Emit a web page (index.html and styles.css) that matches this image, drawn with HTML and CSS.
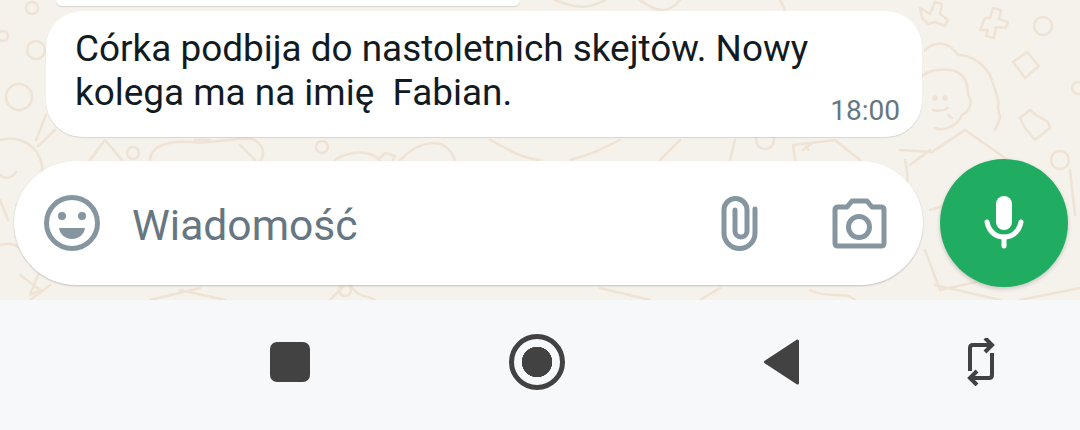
FILE: index.html
```html
<!DOCTYPE html>
<html lang="pl">
<head>
  <meta charset="UTF-8" />
  <title>Czat</title>
  <link rel="stylesheet" href="styles.css">
</head>
<body>
  <div class="chat">
    <!-- tapeta z rysunkami -->
    <svg class="wallpaper" width="1080" height="300" viewBox="0 0 1080 300">
      <circle cx="32" cy="8" r="6"/>
      <circle cx="3" cy="36" r="5"/>
      <circle cx="36" cy="50" r="9"/>
      <circle cx="19" cy="97" r="13"/>
      <path d="M46 115 L36 140 M55 130 L38 146"/>
      <path d="M0 140 C20 135 38 145 42 165 C44 178 34 195 16 205 M0 175 C5 180 12 178 16 172"/>
      <path d="M0 245 C15 240 25 250 30 262 M20 275 L40 290 L30 295 L38 275 M0 200 L8 220"/>
      <path d="M90 160 L105 140 L122 160"/>
      <circle cx="133" cy="153" r="6"/>
      <path d="M150 160 C150 148 165 140 190 142 C215 145 240 135 255 140 C268 150 262 158 260 162"/>
      <path d="M195 140 L210 140 M240 145 L255 160"/>
      <circle cx="322" cy="147" r="6"/>
      <path d="M335 160 C350 150 370 150 380 160 M378 160 L385 153 L395 156 L392 162"/>
      <path d="M400 160 C420 140 445 135 455 160 M490 140 C510 150 520 158 540 160"/>
      <path d="M620 140 C600 150 590 155 570 160 M680 140 L660 160 M735 140 L730 160"/>
      <circle cx="765" cy="140" r="9"/>
      <path d="M795 160 L793 145 L835 140 L860 160 M806 146 L808 150 M803 150 L811 144"/>
      <path d="M555 0 C580 10 590 8 605 0 M780 0 L785 10 M640 0 C660 15 670 12 680 0"/>
      <path d="M920 8 L930 14 L935 2 L942 4 L940 14 L948 20 L945 26 L935 22 L928 24 L922 18 Z"/>
      <path d="M980 30 L985 18 L990 18 L993 8 L1001 10 L999 19 L1008 22 L1006 28 L996 27 L994 38 L986 36 L988 30 Z"/>
      <circle cx="1043" cy="26" r="9"/>
      <path d="M1013 62 L1027 52 L1039 66 L1025 78 Z"/>
      <circle cx="1078" cy="88" r="6"/>
      <path d="M925 50 C935 40 950 42 958 55 C970 55 982 62 990 75 C995 90 1000 100 998 108 L1000 118 L995 130"/>
      <path d="M913 90 C918 72 935 68 950 70 C965 72 968 85 968 95 C972 100 972 110 962 115 C958 125 945 132 935 128"/>
      <circle cx="935" cy="98" r="1.5"/>
      <circle cx="945" cy="98" r="1.5"/>
      <path d="M933 110 C940 112 945 110 948 108 M948 115 L952 118"/>
      <path d="M900 150 L932 152 L965 130 L1008 160 M930 150 L910 165"/>
      <path d="M1020 118 L1030 110 L1036 115 L1048 122 L1050 128 L1035 140 L1025 128 Z"/>
      <circle cx="1060" cy="160" r="9"/>
      <path d="M875 175 C880 190 890 210 905 215 M905 160 C910 175 905 190 908 200"/>
      <path d="M930 210 L1000 190 M925 250 L940 290 L985 280 M935 285 L1000 300 M1020 300 L1080 288"/>
      <path d="M30 300 L50 285 M150 300 L200 288 M180 290 L225 300 M345 285 L330 300 M350 285 C360 300 370 295 375 300"/>
      <circle cx="345" cy="290" r="6"/>
      <path d="M600 288 L650 300 M700 300 L720 288 M810 290 C830 300 845 290 855 300 M1070 170 L1075 215"/>
    </svg>

    <div class="bubble-top"></div>

    <div class="bubble">
      <p class="bubble-text">Córka podbija do nastoletnich skejtów. Nowy<br>kolega ma na imię&nbsp; Fabian.</p>
      <span class="bubble-time">18:00</span>
    </div>

    <div class="composer">
      <div class="input-bar">
        <svg class="icon-emoji" width="56" height="56" viewBox="0 0 56 56">
          <circle cx="28" cy="28" r="25.5" fill="none" stroke="#8696a0" stroke-width="5"/>
          <circle cx="18" cy="21" r="4" fill="#8696a0"/>
          <circle cx="38" cy="21" r="4" fill="#8696a0"/>
          <path d="M15 33 H41 C40 40 34 44 28 44 C22 44 16 40 15 33 Z" fill="#8696a0"/>
        </svg>
        <span class="placeholder">Wiadomość</span>
        <svg class="icon-clip" width="40" height="56" viewBox="0 0 40 56">
          <path d="M36 14 V38 A15.5 15.5 0 0 1 5 38 V15 A11.5 11.5 0 0 1 28 15 V36 A6 6 0 0 1 16 36 V15" fill="none" stroke="#8696a0" stroke-width="5" stroke-linecap="round"/>
        </svg>
        <svg class="icon-camera" width="56" height="52" viewBox="0 0 56 52">
          <path d="M4 13 Q4 10 7 10 H16 L21 4 H36 L41 10 H50 Q53 10 53 13 V46 Q53 49 50 49 H7 Q4 49 4 46 Z" fill="none" stroke="#8696a0" stroke-width="5" stroke-linejoin="round"/>
          <circle cx="28" cy="30" r="10.5" fill="none" stroke="#8696a0" stroke-width="5"/>
        </svg>
      </div>
      <div class="mic-btn">
        <svg width="42" height="54" viewBox="0 0 42 54">
          <rect x="13" y="0" width="16" height="34" rx="8" fill="#fff"/>
          <path d="M4 26 C6 36 13 41 21 41 C29 41 36 36 38 26" fill="none" stroke="#fff" stroke-width="5" stroke-linecap="round"/>
          <path d="M21 41 V50" stroke="#fff" stroke-width="5" stroke-linecap="round"/>
        </svg>
      </div>
    </div>
  </div>

  <div class="navbar">
    <span class="nav-square"></span>
    <span class="nav-circle"></span>
    <svg class="nav-back" width="38" height="48" viewBox="0 0 38 48">
      <path d="M1.5 24 L33.5 3 V45 Z" fill="#424242" stroke="#424242" stroke-width="3" stroke-linejoin="round"/>
    </svg>
    <svg class="nav-rotate" width="30" height="48" viewBox="0 0 30 48">
      <path d="M4 33 V10 Q4 7 7 7 H26 M19 0 L26 7 L19 14" fill="none" stroke="#424242" stroke-width="4"/>
      <path d="M26 15 V37 Q26 40 23 40 H4 M11 33 L4 40 L11 47" fill="none" stroke="#424242" stroke-width="4"/>
    </svg>
  </div>
</body>
</html>
```

FILE: styles.css
```css
* { margin: 0; padding: 0; box-sizing: border-box; }

html, body {
  width: 1080px;
  height: 430px;
  overflow: hidden;
  font-family: 'Roboto', sans-serif;
  background: #f7f8fa;
}

.chat {
  position: relative;
  height: 300px;
  overflow: hidden;
  background: #f5f1eb;
}

.wallpaper {
  position: absolute;
  top: 0;
  left: 0;
  fill: none;
  stroke: #efe3d5;
  stroke-width: 2.5;
  stroke-linecap: round;
  stroke-linejoin: round;
}

.bubble-top {
  position: relative;
  height: 6px;
  width: 464px;
  margin-left: 56px;
  background: #fff;
  border-radius: 0 0 16px 16px;
  box-shadow: 0 1px 1px rgba(0, 0, 0, 0.13);
}

.bubble {
  position: relative;
  width: 876px;
  height: 126px;
  margin: 5px 0 0 46px;
  padding: 16px 22px 0 29px;
  background: #fff;
  border-radius: 36px;
  box-shadow: 0 1px 1px rgba(0, 0, 0, 0.12);
}

.bubble-text {
  font-size: 36.9px;
  line-height: 44px;
  color: #111b21;
}

.bubble-time {
  position: absolute;
  right: 22px;
  bottom: 11px;
  font-size: 28px;
  line-height: 30px;
  color: #667781;
}

.composer {
  position: relative;
  display: flex;
  align-items: center;
  margin-top: 22px;
  padding-left: 14px;
}

.input-bar {
  display: flex;
  align-items: center;
  width: 909px;
  height: 124px;
  padding-left: 30px;
  background: #fff;
  border-radius: 62px;
  box-shadow: 0 1px 2px rgba(0, 0, 0, 0.2);
}

.placeholder {
  margin-left: 32px;
  padding-top: 3px;
  flex: 1;
  font-size: 42.6px;
  color: #667781;
}

.icon-clip { margin-right: 72px; }
.icon-camera { margin-right: 36px; }

.mic-btn {
  display: flex;
  align-items: center;
  justify-content: center;
  width: 128px;
  height: 128px;
  margin-left: 17px;
  background: #21ad61;
  border-radius: 50%;
  box-shadow: 0 2px 4px rgba(0, 0, 0, 0.18);
}

.navbar {
  display: flex;
  align-items: center;
  gap: 199px;
  height: 130px;
  padding: 0 0 6px 270px;
  background: #f7f8fa;
}

.nav-square {
  width: 40px;
  height: 40px;
  background: #424242;
  border-radius: 7px;
}

.nav-circle {
  display: flex;
  width: 56px;
  height: 56px;
  border: 5px solid #424242;
  border-radius: 50%;
  background: radial-gradient(circle, #424242 0 15px, transparent 15.5px);
}

.nav-rotate { margin-left: -35px; }
```
